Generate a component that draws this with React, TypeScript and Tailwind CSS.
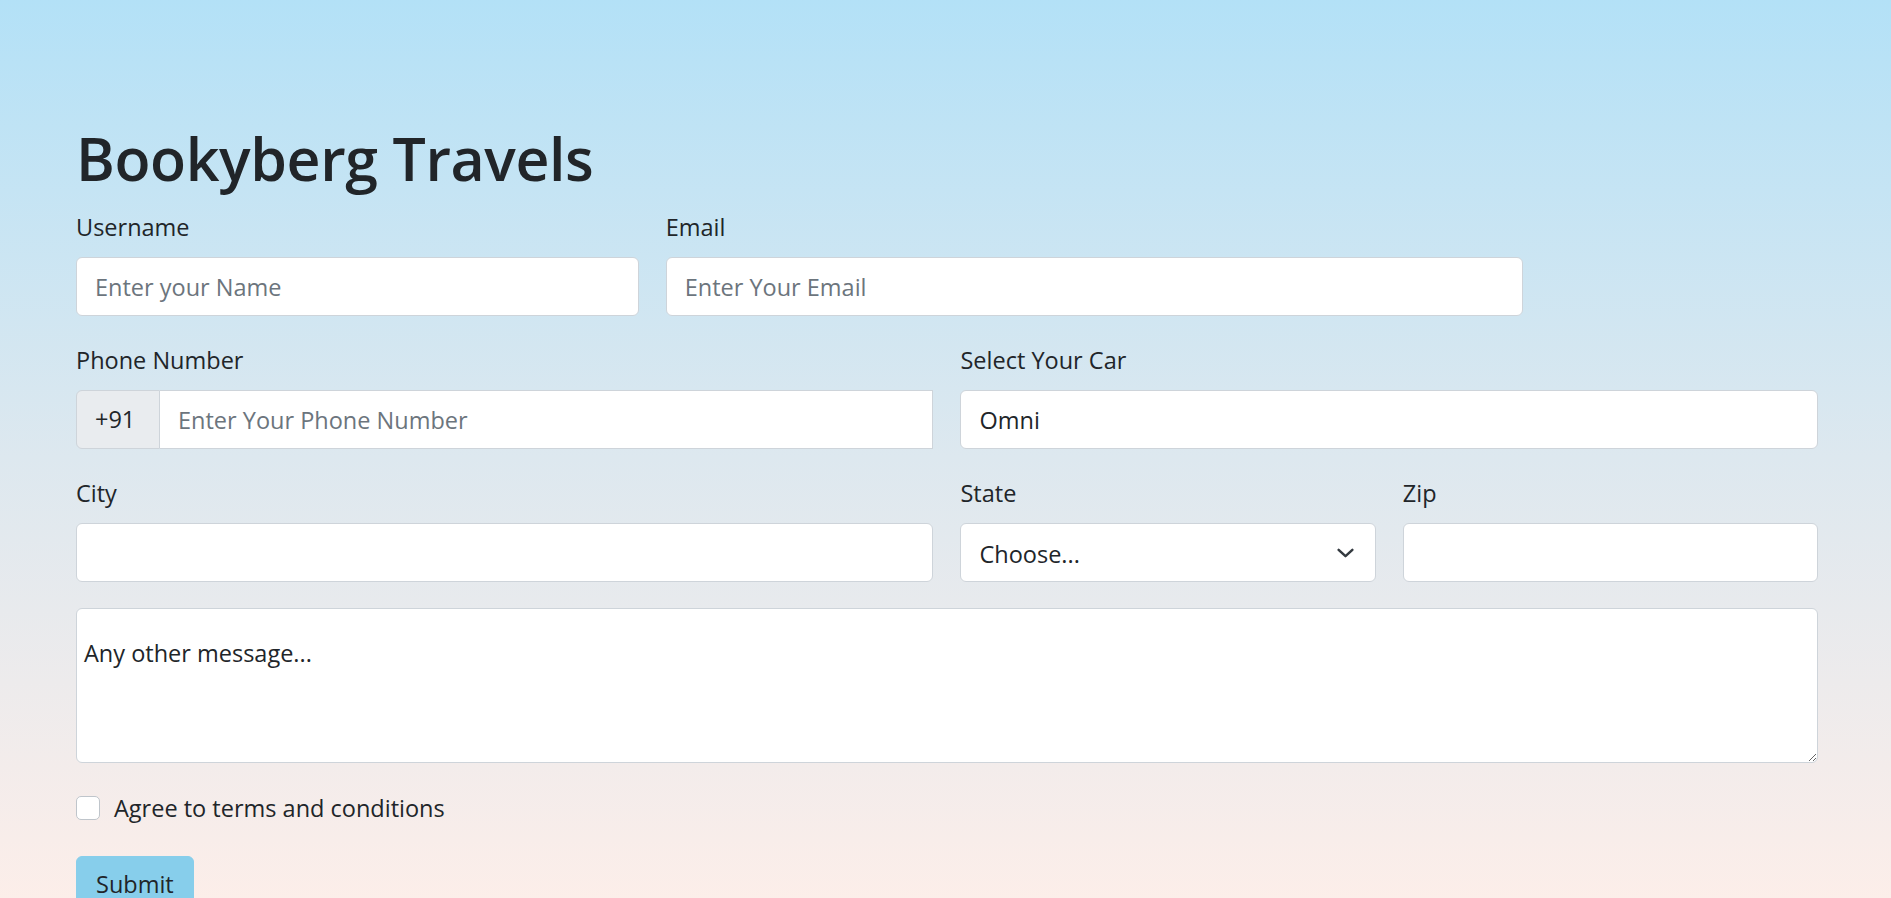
import React from 'react';

const field =
  'block w-full h-[59px] px-[18px] bg-white border border-[#ced4da] rounded-[6px] text-[23.5px] text-[#212529] placeholder:text-[#6c757d] outline-none';

const label = 'block h-[36px] leading-[36px] mb-[12px] text-[23.5px] text-[#212529]';

export default function App() {
  return (
    <div
      className="min-h-screen bg-gradient-to-b from-[#b3e1f7] via-[#dde8ef] to-[#fdeee9] text-[#212529]"
      style={{ fontFamily: '"Open Sans", "Noto Sans", sans-serif' }}
    >
      <div className="pl-[76px] pr-[73px] pt-[122px]">
        <h1 className="text-[59px] leading-[72px] font-semibold mb-[15px] tracking-[-0.4px]">Bookyberg Travels</h1>

        <form className="grid grid-cols-12 gap-x-[27px] gap-y-[26px]">
          {/* Row 1 */}
          <div className="col-span-4">
            <label className={label}>Username</label>
            <input type="text" placeholder="Enter your Name" className={field} />
          </div>
          <div className="col-span-6">
            <label className={label}>Email</label>
            <input type="email" placeholder="Enter Your Email" className={field} />
          </div>

          {/* Row 2 */}
          <div className="col-span-6 col-start-1">
            <label className={label}>Phone Number</label>
            <div className="flex h-[59px]">
              <span className="flex items-center px-[18px] w-[84px] bg-[#e9ecef] border border-[#ced4da] rounded-l-[6px] text-[23.5px] text-[#212529]">
                +91
              </span>
              <input
                type="tel"
                placeholder="Enter Your Phone Number"
                className="flex-1 min-w-0 h-[59px] px-[18px] bg-white border border-l-0 border-[#ced4da] text-[23.5px] placeholder:text-[#6c757d] outline-none"
              />
            </div>
          </div>
          <div className="col-span-6">
            <label className={label}>Select Your Car</label>
            <input type="text" defaultValue="Omni" className={field} />
          </div>

          {/* Row 3 */}
          <div className="col-span-6">
            <label className={label}>City</label>
            <input type="text" className={field} />
          </div>
          <div className="col-span-3">
            <label className={label}>State</label>
            <div className="relative">
              <select className={`${field} appearance-none pr-[54px] pt-[4px]`} defaultValue="">
                <option value="">Choose...</option>
                <option>...</option>
              </select>
              <svg
                className="absolute right-[20px] top-1/2 -translate-y-1/2 pointer-events-none"
                width="21"
                height="15"
                viewBox="0 0 16 12"
                fill="none"
              >
                <path d="M2.5 3.5l5.5 5 5.5-5" stroke="#343a40" strokeWidth="2" strokeLinecap="round" strokeLinejoin="round" />
              </svg>
            </div>
          </div>
          <div className="col-span-3">
            <label className={label}>Zip</label>
            <input type="text" className={field} />
          </div>

          {/* Message */}
          <div className="col-span-12">
            <textarea
              defaultValue="Any other message..."
              className="block w-full h-[155px] pt-[26px] pl-[7px] pr-[18px] bg-white border border-[#ced4da] rounded-[6px] text-[23.5px] leading-[36px] text-[#212529] outline-none"
            />
          </div>
        </form>

        <div className="flex items-center h-[36px] mt-[27px]">
          <input
            type="checkbox"
            className="appearance-none w-[24px] h-[24px] bg-white border border-[#bfc5cb] rounded-[5px] shrink-0"
          />
          <label className="ml-[14px] text-[23.5px] leading-[36px]">Agree to terms and conditions</label>
        </div>

        <button
          type="button"
          className="mt-[30px] h-[56px] px-[19px] bg-[#87ceeb] border border-[#87ceeb] rounded-[6px] text-[23.5px] leading-[36px] text-[#212529]"
        >
          Submit
        </button>
      </div>
    </div>
  );
}
